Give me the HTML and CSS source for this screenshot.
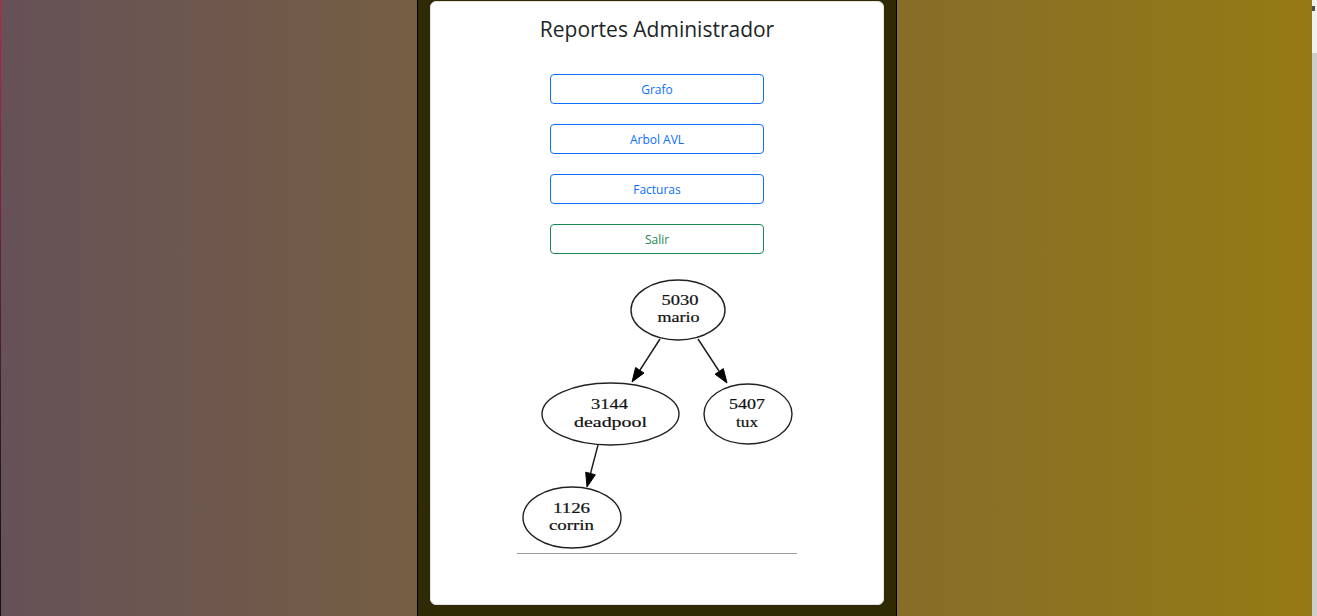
FILE: index.html
```html
<!DOCTYPE html>
<html lang="es">
<head>
<meta charset="utf-8">
<title>Reportes Administrador</title>
<link rel="stylesheet" href="styles.css">
</head>
<body>
<div class="page">
  <div class="edge"></div>
  <div class="bg">
    <div class="column">
      <div class="card">
        <h3 class="title">Reportes Administrador</h3>
        <div class="actions">
          <button class="btn btn-blue">Grafo</button>
          <button class="btn btn-blue">Arbol AVL</button>
          <button class="btn btn-blue">Facturas</button>
          <button class="btn btn-green">Salir</button>
        </div>
        <div class="report">
          <svg class="tree" width="280" height="276" viewBox="0 0 280 276">
            <g class="edges">
              <line x1="143" y1="64" x2="123" y2="95"/>
              <polygon points="115,107 127,98 118.6,92.5"/>
              <line x1="181" y1="64" x2="202" y2="96"/>
              <polygon points="210,108 206.3,93.6 198.1,99.2"/>
              <line x1="81" y1="170" x2="73.5" y2="198.5"/>
              <polygon points="70,212 78.3,199.8 68.7,197.2"/>
            </g>
            <g class="nodes">
              <ellipse cx="161" cy="35" rx="47" ry="30"/>
              <ellipse cx="93.5" cy="139" rx="68.5" ry="31"/>
              <ellipse cx="231" cy="139" rx="44" ry="30"/>
              <ellipse cx="55" cy="242.5" rx="49" ry="30.5"/>
            </g>
            <g class="labels">
              <text x="163" y="29.5" textLength="37" lengthAdjust="spacingAndGlyphs">5030</text>
              <text x="161.5" y="47" textLength="42" lengthAdjust="spacingAndGlyphs">mario</text>
              <text x="92.5" y="134" textLength="37" lengthAdjust="spacingAndGlyphs">3144</text>
              <text x="93.5" y="151.5" textLength="73" lengthAdjust="spacingAndGlyphs">deadpool</text>
              <text x="230" y="134" textLength="36" lengthAdjust="spacingAndGlyphs">5407</text>
              <text x="230" y="151.5" textLength="22" lengthAdjust="spacingAndGlyphs">tux</text>
              <text x="54.5" y="238" textLength="37" lengthAdjust="spacingAndGlyphs">1126</text>
              <text x="54.5" y="255" textLength="45" lengthAdjust="spacingAndGlyphs">corrin</text>
            </g>
          </svg>
          <hr class="rule">
        </div>
      </div>
    </div>
  </div>
  <div class="scrollbar">
    <div class="sb-arrow"></div>
    <div class="sb-thumb"></div>
  </div>
</div>
</body>
</html>
```

FILE: styles.css
```css
* { box-sizing: border-box; }

html, body {
  margin: 0;
  padding: 0;
  height: 616px;
  overflow: hidden;
}

body {
  font-family: "Open Sans", "Noto Sans", sans-serif;
  color: #212529;
}

.page {
  display: flex;
  height: 616px;
}

.edge {
  width: 1px;
  background: linear-gradient(180deg, #c8203f 0%, #6a2040 40%, #1a1a20 80%, #111 100%);
}

.bg {
  flex: 1;
  display: flex;
  justify-content: center;
  background: linear-gradient(90deg, #665158 0%, #957a14 100%);
}

.column {
  width: 480px;
  margin-left: 1px;
  height: 640px;
  background: #302a04;
  border-left: 1px solid #000;
  border-right: 1px solid #000;
  padding: 1px 12px 0 12px;
}

.card {
  background: #fff;
  border: 1px solid #e4e4e4;
  border-radius: 6px;
  height: 604px;
  display: flex;
  flex-direction: column;
  align-items: center;
}

.title {
  margin: 13px 0 0;
  font-size: 21px;
  font-weight: 400;
  line-height: 28px;
  color: #212529;
}

.actions {
  display: flex;
  flex-direction: column;
  gap: 20px;
  margin-top: 31px;
}

.btn {
  width: 214px;
  height: 30px;
  border-radius: 4px;
  background: #fff;
  font-family: "Open Sans", "Noto Sans", sans-serif;
  font-size: 12px;
  padding: 0;
  cursor: pointer;
}

.btn-blue {
  border: 1px solid #0d6efd;
  color: #0d6efd;
}

.btn-green {
  border: 1px solid #198754;
  color: #198754;
}

.report {
  margin-top: 21px;
  width: 280px;
  display: flex;
  flex-direction: column;
}

.tree {
  display: block;
}

.edges line {
  stroke: #1a1a1a;
  stroke-width: 1.4;
}

.edges polygon {
  fill: #000;
  stroke: #000;
  stroke-width: 1;
}

.nodes ellipse {
  fill: none;
  stroke: #222;
  stroke-width: 1.4;
}

.labels text {
  font-family: "Liberation Serif", "Times New Roman", serif;
  font-size: 14px;
  fill: #111;
  text-anchor: middle;
  stroke: #111;
  stroke-width: 0.2;
}

.rule {
  width: 280px;
  margin: 2px 0 0;
  border: 0;
  border-top: 1px solid #9e9e9e;
}

.scrollbar {
  width: 5px;
  display: flex;
  flex-direction: column;
  background: #f1f1f1;
}

.sb-arrow {
  margin-top: 6px;
  width: 3px;
  height: 5px;
  background: #505050;
}

.sb-thumb {
  margin-top: 42px;
  flex: 1;
  background: #cdcdcd;
}
```
